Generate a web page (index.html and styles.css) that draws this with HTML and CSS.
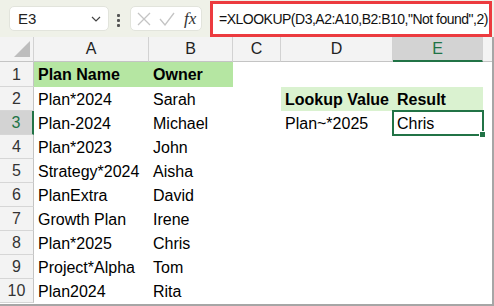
FILE: index.html
```html
<!DOCTYPE html>
<html>
<head>
<meta charset="utf-8">
<link rel="stylesheet" href="styles.css">
</head>
<body>
<div class="app">
  <div class="toolbar">
    <div class="namebox">
      <span class="nb-text">E3</span>
      <svg class="chev" width="10" height="6" viewBox="0 0 10 6"><path d="M1 1 L5 5 L9 1" fill="none" stroke="#444" stroke-width="1.2"/></svg>
    </div>
    <div class="dots"><i></i><i></i><i></i></div>
    <div class="fxbox">
      <svg width="14" height="14" viewBox="0 0 14 14"><path d="M1 1 L13 13 M13 1 L1 13" stroke="#c4c4c4" stroke-width="1.3" fill="none"/></svg>
      <svg width="16" height="14" viewBox="0 0 16 14"><path d="M1 7 L6 13 L15 1" stroke="#c4c4c4" stroke-width="1.3" fill="none"/></svg>
      <span class="fx">fx</span>
    </div>
    <div class="formula">=XLOOKUP(D3,A2:A10,B2:B10,"Not found",2)</div>
  </div>
  <div class="sheet">
    <div class="hd corner"><svg width="17" height="17" viewBox="0 0 17 17"><polygon points="16,0 16,16 0,16" fill="#bdbdbd"/></svg></div>
    <div class="hd col">A</div>
    <div class="hd col">B</div>
    <div class="hd col">C</div>
    <div class="hd col">D</div>
    <div class="hd col sel-col">E</div>
    <div class="hd col filler"></div>

    <div class="rh">1</div>
    <div class="c g1 b">Plan Name</div><div class="c g1 b">Owner</div><div class="c"></div><div class="c"></div><div class="c"></div><div class="c"></div>

    <div class="rh">2</div>
    <div class="c">Plan*2024</div><div class="c">Sarah</div><div class="c"></div><div class="c g2 b">Lookup Value</div><div class="c g2 b">Result</div><div class="c"></div>

    <div class="rh sel-row">3</div>
    <div class="c">Plan-2024</div><div class="c">Michael</div><div class="c"></div><div class="c">Plan~*2025</div><div class="c active">Chris</div><div class="c"></div>

    <div class="rh">4</div>
    <div class="c">Plan*2023</div><div class="c">John</div><div class="c"></div><div class="c"></div><div class="c"></div><div class="c"></div>

    <div class="rh">5</div>
    <div class="c">Strategy*2024</div><div class="c">Aisha</div><div class="c"></div><div class="c"></div><div class="c"></div><div class="c"></div>

    <div class="rh">6</div>
    <div class="c">PlanExtra</div><div class="c">David</div><div class="c"></div><div class="c"></div><div class="c"></div><div class="c"></div>

    <div class="rh">7</div>
    <div class="c">Growth Plan</div><div class="c">Irene</div><div class="c"></div><div class="c"></div><div class="c"></div><div class="c"></div>

    <div class="rh">8</div>
    <div class="c">Plan*2025</div><div class="c">Chris</div><div class="c"></div><div class="c"></div><div class="c"></div><div class="c"></div>

    <div class="rh">9</div>
    <div class="c">Project*Alpha</div><div class="c">Tom</div><div class="c"></div><div class="c"></div><div class="c"></div><div class="c"></div>

    <div class="rh">10</div>
    <div class="c">Plan2024</div><div class="c">Rita</div><div class="c"></div><div class="c"></div><div class="c"></div><div class="c"></div>
  </div>
</div>
</body>
</html>
```
FILE: styles.css
```css
* { box-sizing: border-box; }
html, body { margin: 0; padding: 0; background: #fff; }
body { width: 494px; height: 306px; overflow: hidden; font-family: "Liberation Sans", Arial, sans-serif; }

.app { width: 494px; height: 306px; display: flex; flex-direction: column; }

.toolbar {
  height: 37px;
  background: #eff1e8;
  display: flex;
  align-items: flex-start;
  padding-left: 9px;
}
.namebox {
  margin-top: 6px;
  width: 100px;
  height: 25px;
  background: #fff;
  border: 1px solid #e2e4dc;
  border-radius: 5px;
  display: flex;
  align-items: center;
  justify-content: space-between;
  padding: 0 7px 0 8px;
}
.nb-text { font-size: 15px; color: #222; }
.chev { margin-top: 1px; }
.dots {
  margin: 14px 0 0 8px;
  width: 3px;
  display: flex;
  flex-direction: column;
  gap: 2px;
}
.dots i { display: block; width: 3px; height: 3px; background: #555; border-radius: 1px; }
.fxbox {
  margin: 6px 0 0 10px;
  width: 72px;
  height: 25px;
  background: #fff;
  border: 1px solid #e2e4dc;
  border-radius: 5px;
  display: flex;
  align-items: center;
  gap: 8px;
  padding-left: 6px;
}
.fx {
  font-family: "Liberation Serif", serif;
  font-style: italic;
  font-size: 17px;
  color: #333;
  margin-left: 1px;
}
.formula {
  margin: 1px 0 0 8px;
  width: 282px;
  height: 36px;
  background: #fff;
  border: 3px solid #ec3b3f;
  display: flex;
  align-items: center;
  padding-left: 6px;
  font-size: 14px;
  letter-spacing: -0.5px;
  color: #111;
  white-space: nowrap;
}

.sheet {
  flex: 1;
  display: grid;
  grid-template-columns: 34px 115px 84px 48px 112px 90px 9px;
  grid-template-rows: 25px 25px repeat(9, 24px);
  border-right: 2px solid #a6a6a6;
  border-bottom: 2px solid #a6a6a6;
  background: #fff;
}
.hd {
  background: #f3f3f3;
  border-right: 1px solid #d2d2d2;
  border-bottom: 1px solid #c4c4c4;
  display: flex;
  align-items: center;
  justify-content: center;
  font-size: 16px;
  color: #222;
}
.corner { align-items: flex-end; justify-content: flex-end; padding: 0 2px 3px 0; }
.filler { border-right: none; }
.sel-col {
  background: #d3d3d3;
  color: #217346;
  border-bottom: 2px solid #217346;
}
.rh {
  background: #f3f3f3;
  border-right: 1px solid #c4c4c4;
  border-bottom: 1px solid #d6d6d6;
  display: flex;
  align-items: center;
  justify-content: center;
  font-size: 16px;
  color: #333;
  padding-top: 1px;
}
.sel-row {
  background: #d3d3d3;
  color: #217346;
  border-right: 2px solid #217346;
}
.c {
  display: flex;
  align-items: center;
  padding: 1px 0 0 4px;
  font-size: 16px;
  color: #000;
  white-space: nowrap;
}
.b { font-weight: bold; }
.g1 { background: #b5e6a2; }
.g2 { background: #daf2d0; }
.active {
  position: relative;
  outline: 2px solid #217346;
  outline-offset: -1px;
}
.active::after {
  content: "";
  position: absolute;
  right: -3px;
  bottom: -3px;
  width: 5px;
  height: 5px;
  background: #217346;
  border: 1px solid #fff;
}
```
